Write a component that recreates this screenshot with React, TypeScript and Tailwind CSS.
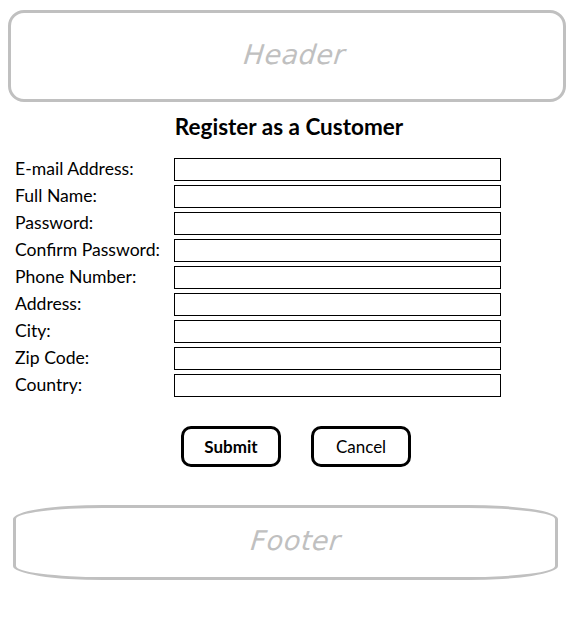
const fields = [
  "E-mail Address:",
  "Full Name:",
  "Password:",
  "Confirm Password:",
  "Phone Number:",
  "Address:",
  "City:",
  "Zip Code:",
  "Country:",
];

const sketchFont = { fontFamily: "'DejaVu Sans', sans-serif" };

export default function App() {
  return (
    <div className="w-[576px] h-[624px] bg-white font-['Lato',sans-serif] text-black">
      <div className="pt-[10px] pl-2">
        <div className="w-[558px] h-[92px] border-[3px] border-[#c0c0c0] rounded-[16px] flex items-center justify-center pb-[2px] pl-[16px]">
          <span
            className="italic text-[27px] text-[#c0c0c0] tracking-[0.5px] -skew-x-6"
            style={sketchFont}
          >
            Header
          </span>
        </div>
      </div>

      <h1 className="mt-[12px] text-center text-[22.5px] font-bold leading-[26px] pl-[2px]">
        Register as a Customer
      </h1>

      <div className="mt-[18px] flex flex-col gap-[4px]">
        {fields.map((label) => (
          <div key={label} className="flex items-center h-[23px]">
            <label className="w-[174px] pl-[15px] pb-[2px] text-[17.6px] leading-[20px]">
              {label}
            </label>
            <div className="w-[327px] h-[23px] border border-black" />
          </div>
        ))}
      </div>

      <div className="mt-[29px] ml-[181px] flex gap-[30px]">
        <button className="w-[100px] h-[41px] border-[3px] border-black rounded-[10px] text-[17px] font-bold">
          Submit
        </button>
        <button className="w-[100px] h-[41px] border-[3px] border-black rounded-[10px] text-[17px]">
          Cancel
        </button>
      </div>

      <div className="mt-[38px] ml-[13px] w-[545px] h-[75px] border-[3px] border-[#c0c0c0] rounded-[90px/14px] flex items-center justify-center pl-[20px] pb-[3px]">
        <span
          className="italic text-[27px] text-[#c0c0c0] tracking-[0.5px] -skew-x-6"
          style={sketchFont}
        >
          Footer
        </span>
      </div>
    </div>
  );
}
